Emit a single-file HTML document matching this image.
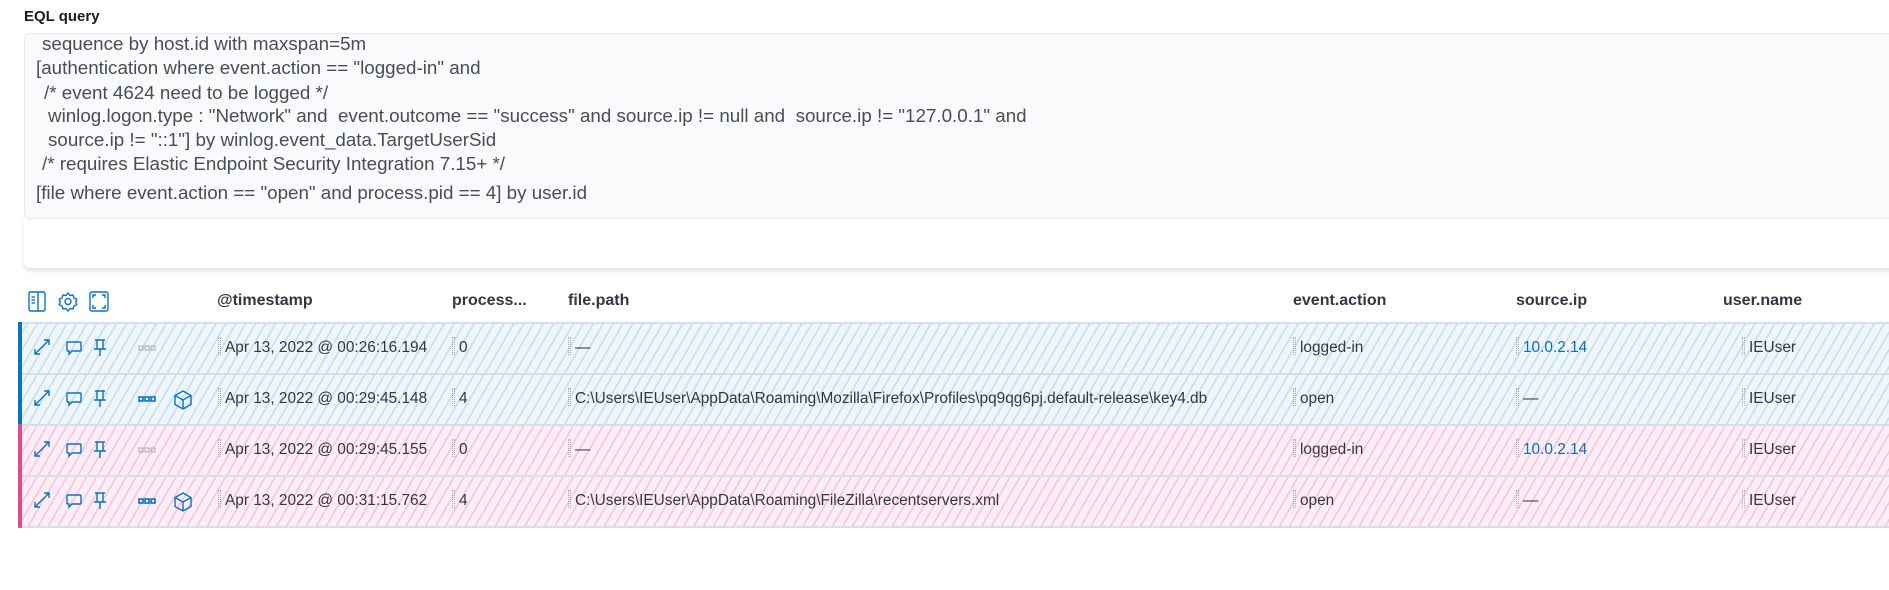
<!DOCTYPE html>
<html><head><meta charset="utf-8"><style>
*{box-sizing:border-box;margin:0;padding:0}
body{width:1889px;height:590px;background:#fff;font-family:"Liberation Sans",sans-serif;color:#343741;position:relative;overflow:hidden}
.abs{position:absolute;white-space:nowrap}
.lbl{left:24px;top:8px;font-size:15px;font-weight:bold;color:#1a1c21}
.ta{position:absolute;left:24px;top:33px;width:1880px;height:186px;background:#f9fafc;border:1px solid #e6e9ef;border-radius:6px 0 0 6px;overflow:hidden}
.ta div{position:absolute;font-size:18.8px;line-height:25px;color:#4a4d55;white-space:pre}
.pan{position:absolute;left:24px;top:219px;width:1880px;height:49px;background:#fff;border-radius:0 0 0 6px;box-shadow:0 3px 4px rgba(0,0,0,.12)}
.hd{font-size:16px;font-weight:bold;color:#343741;top:292px}
.row{position:absolute;left:18px;width:1880px;height:51px;border-top:2px solid #d6dfe9}
.b{background:repeating-linear-gradient(120deg,#eef5fb 0 7px,#c8def0 7px 8.6px)}
.p{background:repeating-linear-gradient(120deg,#fdeef5 0 7px,#f5c6dc 7px 8.6px)}
.row:before{content:"";position:absolute;left:0;top:-2px;width:4px;height:53px}
.b:before{background:#0b71c4}.p:before{background:#e8488b}
.c{position:absolute;top:15px;font-size:15.4px;white-space:nowrap;color:#343741}
.c i{display:inline-block;width:3px;height:18px;margin-right:4px;vertical-align:-3px;border-left:1px dotted #aaa;border-right:1px dotted #aaa}
.lnk{color:#0b6fc0}
svg{position:absolute}
</style></head><body>
<div class="abs lbl">EQL query</div>
<div class="ta">
<div style="left:17px;top:-3px">sequence by host.id with maxspan=5m</div>
<div style="left:11px;top:21px">[authentication where event.action == "logged-in" and</div>
<div style="left:19px;top:46px">/* event 4624 need to be logged */</div>
<div style="left:23px;top:69px">winlog.logon.type : "Network" and  event.outcome == "success" and source.ip != null and  source.ip != "127.0.0.1" and</div>
<div style="left:23px;top:93px">source.ip != "::1"] by winlog.event_data.TargetUserSid</div>
<div style="left:17px;top:117px">/* requires Elastic Endpoint Security Integration 7.15+ */</div>
<div style="left:11px;top:146px">[file where event.action == "open" and process.pid == 4] by user.id</div>
</div>
<div class="pan"></div>

<svg style="left:28px;top:290px" width="90" height="24" fill="none" stroke="#0b71c4" stroke-width="1.4">
<rect x="1" y="2" width="16" height="19" rx="1.5"/><line x1="10" y1="2" x2="10" y2="21"/><line x1="3.5" y1="7" x2="7" y2="7"/><line x1="3.5" y1="10" x2="7" y2="10"/><line x1="3.5" y1="13" x2="7" y2="13"/>
<circle cx="40" cy="11.5" r="3"/><path d="M40 3l2 2.5 3-.5 1 3 2.8 1.3-1 2.7 1 2.7-2.8 1.3-1 3-3-.5-2 2.5-2-2.5-3 .5-1-3-2.8-1.3 1-2.7-1-2.7 2.8-1.3 1-3 3 .5z"/>
<rect x="62" y="2" width="18" height="19" rx="2"/><path d="M65 8V5h3M74 5h3v3M77 15v3h-3M68 18h-3v-3"/>
</svg>
<div class="abs hd" style="left:217px">@timestamp</div>
<div class="abs hd" style="left:452px">process...</div>
<div class="abs hd" style="left:568px">file.path</div>
<div class="abs hd" style="left:1293px">event.action</div>
<div class="abs hd" style="left:1516px">source.ip</div>
<div class="abs hd" style="left:1723px">user.name</div>

<div class="row b" style="top:322px"></div>
<div class="row b" style="top:373px"></div>
<div class="row p" style="top:424px"></div>
<div class="row p" style="top:475px;height:53px;border-bottom:2px solid #d6dfe9"></div>

<svg style="left:31px;top:336px" width="200" height="200" fill="none" stroke="#0b71c4" stroke-width="1.4">
<defs><g id="ic">
<path d="M4 18L18 4M4 13v5h5M13 4h5v5"/>
<path d="M37 6h12a1 1 0 0 1 1 1v7a1 1 0 0 1-1 1h-8l-3 3v-3h-1a1 1 0 0 1-1-1V7a1 1 0 0 1 1-1z"/>
<path d="M64 4h10M66 4v9h6V4M63 13h12M69 13v7"/>
</g></defs>
<use href="#ic"/><use href="#ic" y="51"/><use href="#ic" y="102"/><use href="#ic" y="153"/>
<g stroke="#aab" stroke-width="1"><rect x="108" y="10" width="4" height="4"/><rect x="114" y="10" width="4" height="4"/><rect x="120" y="10" width="4" height="4"/></g>
<g stroke="#aab" stroke-width="1"><rect x="108" y="112" width="4" height="4"/><rect x="114" y="112" width="4" height="4"/><rect x="120" y="112" width="4" height="4"/></g>
<g stroke-width="1.6"><rect x="108" y="61" width="4" height="4"/><rect x="114" y="61" width="4" height="4"/><rect x="120" y="61" width="4" height="4"/></g>
<g stroke-width="1.6"><rect x="108" y="163" width="4" height="4"/><rect x="114" y="163" width="4" height="4"/><rect x="120" y="163" width="4" height="4"/></g>
<path d="M152 55l8 4.5v9l-8 4.5-8-4.5v-9zM144 59.5l8 4.5 8-4.5M152 64v9"/>
<path d="M152 157l8 4.5v9l-8 4.5-8-4.5v-9zM144 161.5l8 4.5 8-4.5M152 166v9"/>
</svg>

<div class="c" style="left:218px;top:337px"><i></i>Apr 13, 2022 @ 00:26:16.194</div>
<div class="c" style="left:452px;top:337px"><i></i>0</div>
<div class="c" style="left:568px;top:337px"><i></i>—</div>
<div class="c" style="left:1293px;top:337px"><i></i>logged-in</div>
<div class="c" style="left:1516px;top:337px"><i></i><span class="lnk">10.0.2.14</span></div>
<div class="c" style="left:1742px;top:337px"><i></i>IEUser</div>

<div class="c" style="left:218px;top:388px"><i></i>Apr 13, 2022 @ 00:29:45.148</div>
<div class="c" style="left:452px;top:388px"><i></i>4</div>
<div class="c" style="left:568px;top:388px"><i></i>C:\Users\IEUser\AppData\Roaming\Mozilla\Firefox\Profiles\pq9qg6pj.default-release\key4.db</div>
<div class="c" style="left:1293px;top:388px"><i></i>open</div>
<div class="c" style="left:1516px;top:388px"><i></i>—</div>
<div class="c" style="left:1742px;top:388px"><i></i>IEUser</div>

<div class="c" style="left:218px;top:439px"><i></i>Apr 13, 2022 @ 00:29:45.155</div>
<div class="c" style="left:452px;top:439px"><i></i>0</div>
<div class="c" style="left:568px;top:439px"><i></i>—</div>
<div class="c" style="left:1293px;top:439px"><i></i>logged-in</div>
<div class="c" style="left:1516px;top:439px"><i></i><span class="lnk">10.0.2.14</span></div>
<div class="c" style="left:1742px;top:439px"><i></i>IEUser</div>

<div class="c" style="left:218px;top:490px"><i></i>Apr 13, 2022 @ 00:31:15.762</div>
<div class="c" style="left:452px;top:490px"><i></i>4</div>
<div class="c" style="left:568px;top:490px"><i></i>C:\Users\IEUser\AppData\Roaming\FileZilla\recentservers.xml</div>
<div class="c" style="left:1293px;top:490px"><i></i>open</div>
<div class="c" style="left:1516px;top:490px"><i></i>—</div>
<div class="c" style="left:1742px;top:490px"><i></i>IEUser</div>
</body></html>
